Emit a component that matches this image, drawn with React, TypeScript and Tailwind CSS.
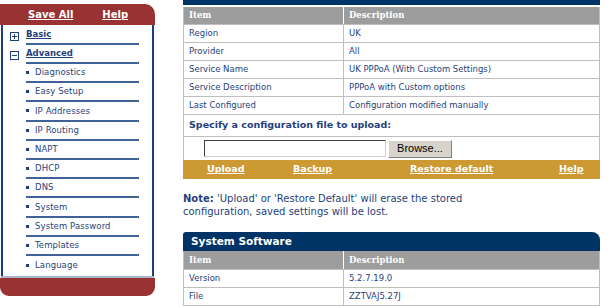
import React from "react";

const navy = "text-[#1f3f7a]";

function NavSub({ label, last }: { label: string; last?: boolean }) {
  return (
    <div className={`h-[19.2px] ml-[23px] mr-[13px] flex items-center ${last ? "" : "border-b-2 border-b-[#3f6396]"}`}>
      <span className="w-[3px] h-[3px] bg-[#1f3f7a] mr-[6px]" />
      <span className="text-[8.5px] tracking-[0.1px] text-[#1f3f7a]">{label}</span>
    </div>
  );
}

function Row({ a, b }: { a: string; b: string }) {
  return (
    <div className="flex h-[18px] border-b border-[#bfbfbf] text-[8.5px] text-[#1f3f7a]">
      <div className="w-[160px] pl-[5px] border-r border-[#bfbfbf] flex items-center">{a}</div>
      <div className="flex-1 pl-[5px] flex items-center">{b}</div>
    </div>
  );
}

function HeadRow({ h }: { h: string }) {
  return (
    <div className={`flex ${h} bg-[#9d9d9d] text-white font-bold text-[8.5px] border-b border-[#bfbfbf]`} style={{ fontFamily: '"DejaVu Serif", serif' }}>
      <div className="w-[160px] pl-[5px] border-r border-white flex items-center">Item</div>
      <div className="flex-1 pl-[5px] flex items-center">Description</div>
    </div>
  );
}

export default function App() {
  return (
    <div className="w-[616px] h-[307px] bg-white overflow-hidden relative flex" style={{ fontFamily: '"DejaVu Sans", Verdana, sans-serif' }}>
      {/* Left nav */}
      <div className="w-[155px] pt-[4px] shrink-0">
        <div className="h-[21px] bg-[#993333] rounded-tr-[10px] flex items-center text-white font-bold text-[10px] underline">
          <span className="ml-[28px]">Save All</span>
          <span className="ml-[29px]">Help</span>
        </div>
        <div className="border-x-2 border-[#1f3f7a] mx-[1px] pt-[1px] h-[251px] bg-white">
          <div className="h-[19px] flex items-center">
            <span className="ml-[7px] mt-[1px] w-[9px] h-[9px] border border-[#1f3f7a] flex items-center justify-center">
              <span className="relative w-[5px] h-[5px]">
                <span className="absolute left-0 top-[2px] w-[5px] h-[1px] bg-[#1f3f7a]" />
                <span className="absolute left-[2px] top-0 w-[1px] h-[5px] bg-[#1f3f7a]" />
              </span>
            </span>
            <span className="flex-1 ml-[7px] mr-[13px] h-full flex items-center border-b-2 border-b-[#3f6396]">
              <span className={`font-bold text-[8.5px] underline ${navy}`}>Basic</span>
            </span>
          </div>
          <div className="h-[19px] flex items-center">
            <span className="ml-[7px] mt-[1px] w-[9px] h-[9px] border border-[#1f3f7a] flex items-center justify-center">
              <span className="w-[5px] h-[1px] bg-[#1f3f7a]" />
            </span>
            <span className="flex-1 ml-[7px] mr-[13px] h-full flex items-center border-b-2 border-b-[#3f6396]">
              <span className={`font-bold text-[8.5px] underline ${navy}`}>Advanced</span>
            </span>
          </div>
          {["Diagnostics", "Easy Setup", "IP Addresses", "IP Routing", "NAPT", "DHCP", "DNS", "System", "System Password", "Templates", "Language"].map((l, i, arr) => (
            <NavSub key={l} label={l} last={i === arr.length - 1} />
          ))}
        </div>
        <div className="h-[2px] bg-[#a9b6c9] mx-[1px]" />
        <div className="h-[18px] bg-[#993333] rounded-b-[9px]" />
      </div>

      {/* Main */}
      <div className="ml-[28px] w-[417px]">
        <div className="h-[5px] bg-[#003366]" />
        <div className="h-[2px]" />
        <div className="border-x border-[#bfbfbf]">
          <HeadRow h="h-[18px]" />
          <Row a="Region" b="UK" />
          <Row a="Provider" b="All" />
          <Row a="Service Name" b="UK PPPoA (With Custom Settings)" />
          <Row a="Service Description" b="PPPoA with Custom options" />
          <Row a="Last Configured" b="Configuration modified manually" />
          <div className="h-[22px] pl-[5px] flex items-center border-b border-[#bfbfbf] font-bold text-[9.5px] text-[#1f3f7a]">
            Specify a configuration file to upload:
          </div>
          <div className="h-[23px] flex items-center pl-[20px]">
            <div className="w-[182px] h-[17px] border border-[#404040] border-r-[#d0d0d0] border-b-[#d0d0d0] bg-white" />
            <div className="ml-[2px] w-[64px] h-[18px] bg-[#d8d4cc] border border-[#808080] border-l-white border-t-white text-[11px] text-black flex items-center justify-center" style={{ fontFamily: '"Liberation Sans", Arial, sans-serif' }}>
              Browse...
            </div>
          </div>
        </div>
        <div className="h-[19px] bg-[#cc9933] flex items-center text-white font-bold text-[9.5px] relative">
          <span className="absolute left-[24px] underline">Upload</span>
          <span className="absolute left-[110px] underline">Backup</span>
          <span className="absolute left-[227px] underline">Restore default</span>
          <span className="absolute left-[376px] underline">Help</span>
        </div>
        <div className="mt-[13px] text-[10px] leading-[13px] text-[#1f3f7a]">
          <span className="font-bold">Note:</span> 'Upload' or 'Restore Default' will erase the stored
          <br />
          configuration, saved settings will be lost.
        </div>
        <div className="mt-[14px] h-[19px] bg-[#003366] rounded-tl-[3px] rounded-tr-[8px] flex items-center pl-[8px] text-white font-bold text-[10.5px]">
          System Software
        </div>
        <div className="border-x border-[#bfbfbf]">
          <HeadRow h="h-[19px]" />
          <Row a="Version" b="5.2.7.19.0" />
          <Row a="File" b="ZZTVAJ5.27J" />
        </div>
      </div>
    </div>
  );
}
